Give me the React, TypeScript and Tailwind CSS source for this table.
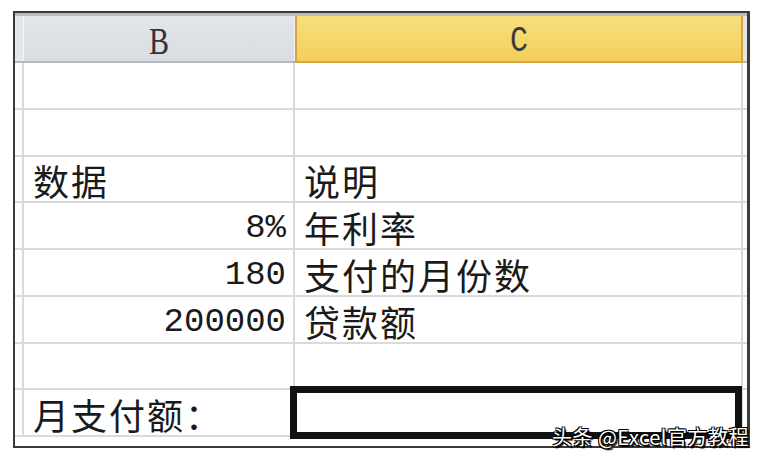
import React from "react";

const cjk = '"Noto Sans CJK SC", "Noto Sans", sans-serif';

interface Row {
  b?: string;
  bAlign?: "left" | "right";
  c?: string;
  selected?: boolean;
}

const rows: Row[] = [
  {},
  {},
  { b: "数据", bAlign: "left", c: "说明" },
  { b: "8%", bAlign: "right", c: "年利率" },
  { b: "180", bAlign: "right", c: "支付的月份数" },
  { b: "200000", bAlign: "right", c: "贷款额" },
  {},
  { b: "月支付额：", bAlign: "left", selected: true },
];

// digits are mono (half-width like the sheet font), CJK stays full width
const CellText = ({ text }: { text: string }) => {
  const parts = text.split(/([0-9%]+)/).filter(Boolean);
  return (
    <span className="leading-none whitespace-nowrap text-[#1a1a1a]">
      {parts.map((p, i) =>
        /^[0-9%]+$/.test(p) ? (
          <span key={i} className="text-[34px] font-['Liberation_Mono',monospace]">
            {p}
          </span>
        ) : (
          <span key={i} className="text-[36px] tracking-[2px]" style={{ fontFamily: cjk }}>
            {p}
          </span>
        )
      )}
    </span>
  );
};

export default function App() {
  return (
    <div className="relative w-[763px] h-[460px] bg-white pt-[11px] pl-[13px]">
      <div className="relative w-[737px] h-[437px] border-t-2 border-l-2 border-b-2 border-r-[3px] border-[#3a3a3a] overflow-hidden bg-white">
        {/* column header */}
        <div className="flex h-[50px] border-t-[3px] border-[#b9bcc0] border-b-2 border-b-[#b4b8bd]">
          <div className="w-[9px] bg-[#e3e6ea] border-r border-[#f4f5f6]" />
          <div className="w-[271px] flex items-center justify-center bg-gradient-to-b from-[#e2e5e9] to-[#d9dde2] border-r border-[#eef0f2]">
            <span className="text-[30px] text-[#333] scale-y-125 font-['Liberation_Serif',serif] leading-none mt-[4px]">
              B
            </span>
          </div>
          <div className="w-[448px] flex items-center justify-center bg-gradient-to-b from-[#f8df7c] to-[#f2cf58] border-2 border-t-0 border-[#dba243] -mb-[2px]">
            <span className="text-[30px] text-[#3a3a3a] scale-y-125 font-['Liberation_Mono',monospace] leading-none mt-[4px]">
              C
            </span>
          </div>
          <div className="flex-1 bg-[#e3e6ea]" />
        </div>

        {rows.map((r, i) => (
          <div key={i} className="flex h-[46.75px] border-b-2 border-[#dadada]">
            <div className="w-[9px] border-r-2 border-[#dadada]" />
            <div
              className={`w-[271px] flex items-end pb-[3px] border-r-2 border-[#dadada] ${
                r.bAlign === "right" ? "justify-end pr-[7px]" : "justify-start pl-[9px]"
              }`}
            >
              {r.b && <CellText text={r.b} />}
            </div>
            <div className="relative w-[448px] flex items-end pb-[3px] pl-[9px] border-r-2 border-[#dadada]">
              {r.c && <CellText text={r.c} />}
              {r.selected && (
                <div className="absolute -left-[5px] -right-[1px] -top-[4px] -bottom-[4px] border-[7px] border-[#111]" />
              )}
            </div>
            <div className="flex-1" />
          </div>
        ))}
      </div>

      <div
        className="absolute right-[14px] top-[427px] text-[20px] leading-none text-white whitespace-nowrap tracking-[0.5px] [text-shadow:1px_1px_0_#000,-1px_-1px_0_#000,1px_-1px_0_#000,-1px_1px_0_#000,2px_2px_1px_#000]"
        style={{ fontFamily: cjk }}
      >
        头条 @Excel官方教程
      </div>
    </div>
  );
}
